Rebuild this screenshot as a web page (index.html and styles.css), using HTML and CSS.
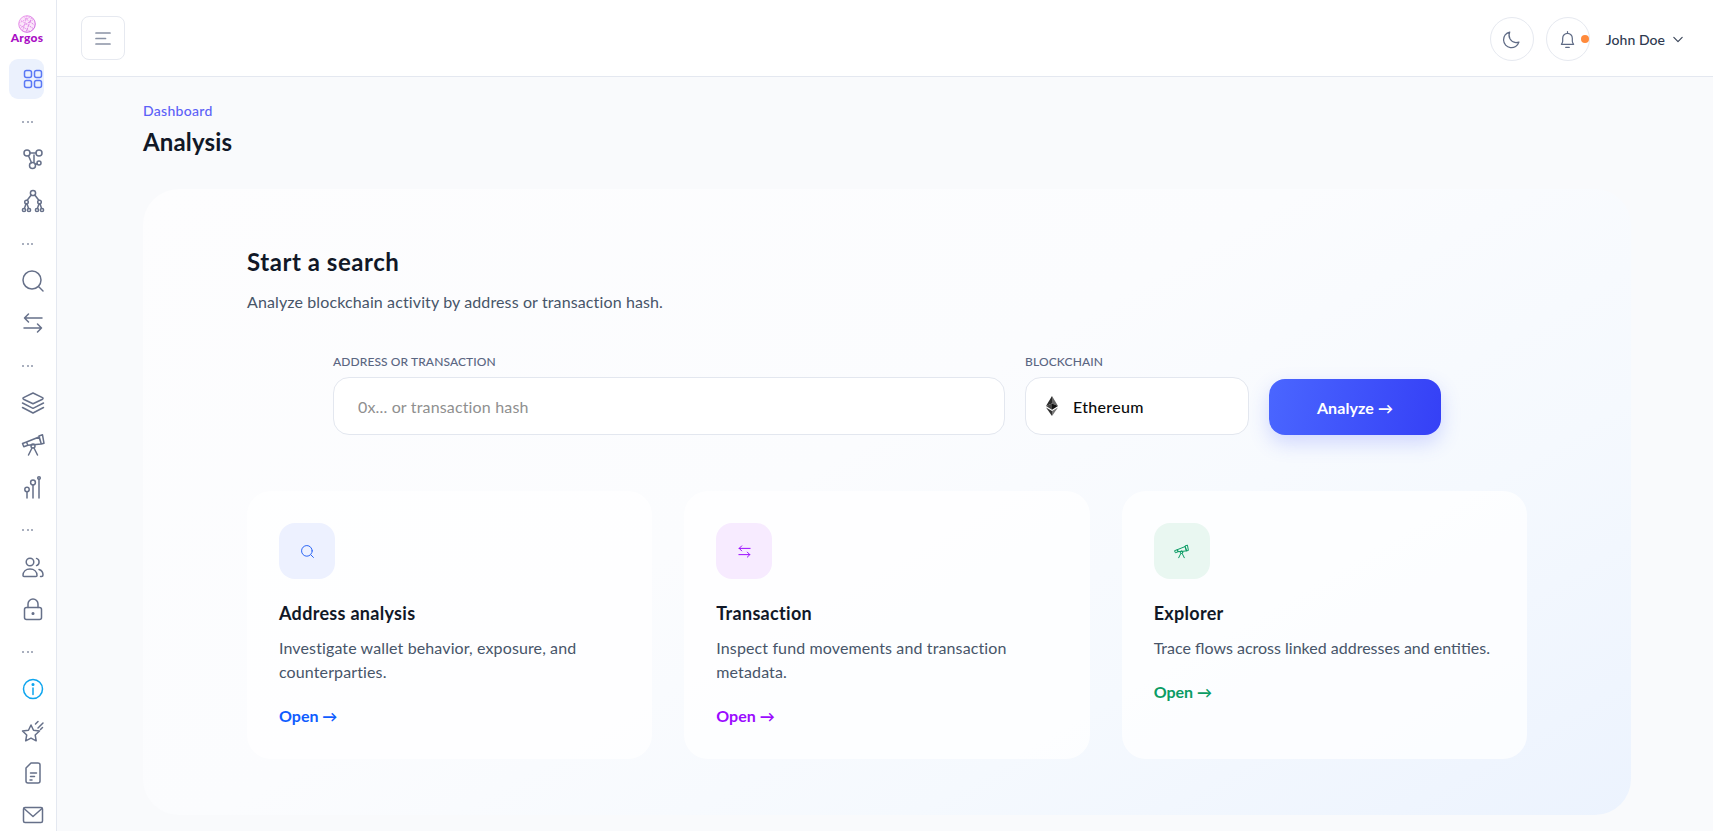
FILE: index.html
```html
<!DOCTYPE html>
<html lang="en">
<head>
<meta charset="utf-8">
<title>Analysis</title>
<link rel="stylesheet" href="styles.css">
</head>
<body>
<div class="app">
  <aside class="sidebar">
    <div class="logo">
      <svg class="logo-mark" viewBox="0 0 20 20"><defs><linearGradient id="lg" x1="0" y1="0" x2="1" y2="1"><stop offset="0" stop-color="#f0a0ec"/><stop offset="1" stop-color="#c040d8"/></linearGradient></defs><circle cx="10" cy="10" r="9.200" fill="#fbe6fa" stroke="url(#lg)" stroke-width="1"/><path d="M3 6l14 9M2 11l11 7M6 2l12 9M10 1L5 18M15 3L9 19M3 14L17 5M1 9l13-7" stroke="url(#lg)" stroke-width=".8" stroke-dasharray="1.600 .8" fill="none"/></svg>
      <span class="logo-text">Argos</span>
    </div>
    <nav class="nav">
      <a class="nav-item active"><svg class="ico" viewBox="0 0 24 24"><rect x="3.500" y="3.500" width="7" height="7" rx="2"/><rect x="13.500" y="3.500" width="7" height="7" rx="2"/><rect x="3.500" y="13.500" width="7" height="7" rx="2"/><rect x="13.500" y="13.500" width="7" height="7" rx="2"/></svg></a>
      <div class="nav-dots"><i></i><i></i><i></i></div>
      <a class="nav-item"><svg class="ico" viewBox="0 0 24 24"><circle cx="6" cy="6" r="3"/><circle cx="18" cy="6" r="3"/><circle cx="11.500" cy="18.500" r="3"/><circle cx="18" cy="16" r="2"/><path d="M9 6h6M7.500 8.700l3 7M13 8v7M14.400 17.500l1.800-.8"/></svg></a>
      <a class="nav-item"><svg class="ico" viewBox="0 0 24 24"><circle cx="12" cy="4" r="2.600"/><circle cx="5.500" cy="13" r="1.800"/><circle cx="18.500" cy="13" r="1.800"/><circle cx="3" cy="21" r="1.600"/><circle cx="8" cy="21" r="1.600"/><circle cx="16" cy="21" r="1.600"/><circle cx="21" cy="21" r="1.600"/><path d="M10.200 6L6.200 11.300M13.800 6l4 5.300M5 14.800l-1.600 4.600M6 14.800l1.600 4.600M18 14.800l-1.600 4.600M19 14.800l1.600 4.600"/></svg></a>
      <div class="nav-dots"><i></i><i></i><i></i></div>
      <a class="nav-item"><svg class="ico" viewBox="0 0 24 24"><circle cx="11" cy="11" r="9"/><path d="M18 18l4 4"/></svg></a>
      <a class="nav-item"><svg class="ico" viewBox="0 0 24 24"><path d="M21 7H3.500M7.500 3L3.500 7l4 4M3 17h17.500M16.500 13l4 4-4 4"/></svg></a>
      <div class="nav-dots"><i></i><i></i><i></i></div>
      <a class="nav-item"><svg class="ico" viewBox="0 0 24 24"><path d="M12 2l9.500 4.600c.7.4.7 1.200 0 1.600L12 12.800 2.500 8.200c-.7-.4-.7-1.200 0-1.600z"/><path d="M1.500 12l10.500 5.300L22.500 12M1.500 16.500L12 22l10.500-5.500"/></svg></a>
      <a class="nav-item"><svg class="ico" viewBox="0 0 24 24"><path d="M1.500 10.500l4-1.500 1.300 3.300-4 1.500zM5.500 9L18 4l2.300 7-13.500 1.300zM18 3l3.500-1.200 1.500 8.500-2.700.7z"/><circle cx="12" cy="13" r="2"/><path d="M11 15l-3.500 7M13 15l3.500 7"/></svg></a>
      <a class="nav-item"><svg class="ico" viewBox="0 0 24 24"><path d="M6 17v6M12 10v13M18 4v19"/><circle cx="6" cy="14.500" r="2.200"/><circle cx="12" cy="7.500" r="2.400"/><circle cx="18" cy="3" r="1.300"/></svg></a>
      <div class="nav-dots"><i></i><i></i><i></i></div>
      <a class="nav-item"><svg class="ico" viewBox="0 0 24 24"><circle cx="9" cy="7" r="3.800"/><path d="M2 20.500c0-4 3-6.500 7-6.500s7 2.500 7 6.500c0 .6-.4 1-1 1H3c-.6 0-1-.4-1-1z"/><path d="M15.500 3.400a3.800 3.800 0 0 1 0 7.200M18 14.500c2.500.7 4 2.800 4 5.500 0 1-.6 1.500-1.500 1.500h-1"/></svg></a>
      <a class="nav-item"><svg class="ico" viewBox="0 0 24 24"><rect x="3.500" y="10.500" width="17" height="12" rx="2"/><path d="M7 10.500V7a5 5 0 0 1 10 0v3.500"/><circle class="solid" cx="12" cy="16.500" r=".8"/></svg></a>
      <div class="nav-dots"><i></i><i></i><i></i></div>
      <a class="nav-item info"><svg class="ico" viewBox="0 0 24 24"><circle cx="12" cy="12" r="9.500"/><path d="M12 11v6.500"/><circle class="solid" cx="12" cy="7.500" r=".8"/></svg></a>
      <a class="nav-item"><svg class="ico" viewBox="0 0 24 24"><path d="M10 6l2.500 5.200 6 .8-4.300 4 1 5.800-5.200-2.700-5.300 2.700 1-5.800L1.500 12l6-.8z"/><path d="M14.500 5l2.500-2.500M17 9l5-5M19.500 10.500l2-2"/></svg></a>
      <a class="nav-item"><svg class="ico" viewBox="0 0 24 24"><path d="M10 2h7a2 2 0 0 1 2 2v16a2 2 0 0 1-2 2H7a2 2 0 0 1-2-2V7z"/><path d="M9.500 12h6M9.500 15.500h4M9 19h2"/></svg></a>
      <a class="nav-item"><svg class="ico" viewBox="0 0 24 24"><rect x="2.500" y="4.500" width="19" height="15" rx="1.500"/><path d="M3 5.500l9 8 9-8"/></svg></a>
    </nav>
  </aside>

  <div class="main">
    <header class="topbar">
      <button class="toggle" type="button" aria-label="Menu"><svg viewBox="0 0 16 14"><path d="M1 2h14M1 7.500h9.500M1 13h14"/></svg></button>
      <div class="top-actions">
        <button class="round" type="button" aria-label="Theme"><svg viewBox="0 0 24 24"><path d="M10 3.500a9 9 0 1 0 10.500 11.500c-1 .5-2.200.6-3.500.6A8.500 8.500 0 0 1 10 3.500z"/></svg></button>
        <button class="round" type="button" aria-label="Notifications"><svg viewBox="0 0 24 24"><path d="M5 17.500c.9-1.200 1.500-2 1.500-3.500v-3.500a5.500 5.500 0 0 1 11 0V14c0 1.500.6 2.300 1.500 3.500zM10 21h4M12 3v2"/></svg><span class="notify"></span></button>
        <div class="user"><span>John Doe</span><svg viewBox="0 0 12 8"><path d="M1 1.500l5 5 5-5"/></svg></div>
      </div>
    </header>

    <main class="content">
      <a class="crumb">Dashboard</a>
      <h1 class="page-title">Analysis</h1>

      <section class="panel">
        <h2 class="panel-title">Start a search</h2>
        <p class="panel-sub">Analyze blockchain activity by address or transaction hash.</p>

        <form class="search-row">
          <label class="field grow"><span class="field-label label-long">ADDRESS OR TRANSACTION</span><input class="input" type="text" placeholder="0x... or transaction hash"></label>
          <div class="field chain"><span class="field-label">BLOCKCHAIN</span>
            <div class="input select"><svg class="eth" viewBox="0 0 12 20"><path fill="#666" d="M6 0v7.400l6 2.700z"/><path fill="#2a2a2a" d="M6 0L0 10.100l6-2.700z"/><path fill="#111" d="M6 7.400v6.300l6-3.600z"/><path fill="#444" d="M6 7.400l-6 2.700 6 3.600z"/><path fill="#777" d="M6 14.900V20l6-8.500z"/><path fill="#333" d="M6 14.900L0 11.500 6 20z"/></svg><span>Ethereum</span></div>
          </div>
          <button class="analyze" type="button">Analyze <span class="arr">→</span></button>
        </form>

        <div class="cards">
          <article class="card">
            <div class="card-icon blue"><svg viewBox="0 0 24 24"><circle cx="11" cy="11" r="8.500"/><path d="M17.500 17.500l4 4"/></svg></div>
            <h3>Address analysis</h3>
            <p>Investigate wallet behavior, exposure, and counterparties.</p>
            <a class="open blue-text">Open <span class="arr">→</span></a>
          </article>
          <article class="card">
            <div class="card-icon purple"><svg viewBox="0 0 24 24"><path d="M21 7H3.500M7.500 3L3.500 7l4 4M3 17h17.500M16.500 13l4 4-4 4"/></svg></div>
            <h3>Transaction</h3>
            <p>Inspect fund movements and transaction metadata.</p>
            <a class="open purple-text">Open <span class="arr">→</span></a>
          </article>
          <article class="card">
            <div class="card-icon green"><svg viewBox="0 0 24 24"><path d="M1.500 10.500l4-1.500 1.300 3.300-4 1.500zM5.500 9L18 4l2.300 7-13.500 1.300zM18 3l3.500-1.200 1.500 8.500-2.700.7z"/><circle cx="12" cy="13" r="2"/><path d="M11 15l-3.500 7M13 15l3.500 7"/></svg></div>
            <h3>Explorer</h3>
            <p class="tight">Trace flows across linked addresses and entities.</p>
            <a class="open green-text">Open <span class="arr">→</span></a>
          </article>
        </div>
      </section>
    </main>
  </div>
</div>
</body>
</html>
```

FILE: styles.css
```css
* { box-sizing: border-box; }
html, body { margin: 0; height: 100%; }
body {
  font-family: "Lato", "Noto Sans", sans-serif;
  background: #f9fafc;
  color: #0f172a;
  overflow: hidden;
}
h1, h2, h3, p { margin: 0; }
button { font-family: inherit; cursor: pointer; }

.app { display: flex; height: 831px; }

.sidebar {
  flex: 0 0 57px;
  background: #fff;
  border-right: 1px solid #e4e8f0;
}
.logo {
  height: 58px;
  padding-top: 15px;
  display: flex;
  flex-direction: column;
  align-items: center;
  width: 54px;
}
.logo-mark { width: 18px; height: 18px; display: block; flex: none; }
.logo-text {
  margin-top: -1px;
  font-size: 12px;
  line-height: 11px;
  font-weight: 900;
  color: #a90fc4;
  letter-spacing: .25px;
}
.nav { display: flex; flex-direction: column; }
.nav-item {
  display: flex;
  align-items: center;
  height: 40px;
  margin: 1px 0 1px 9px;
  width: 35px;
  padding-left: 12px;
  border-radius: 9px;
  color: #667089;
}
.nav-item.active { background: #ebf1fd; color: #5a78f5; }
.nav-item.info { color: #0ea5ee; }
.ico {
  width: 24px;
  height: 24px;
  flex: none;
  fill: none;
  stroke: currentColor;
  stroke-width: 1.500;
  stroke-linecap: round;
  stroke-linejoin: round;
}
.ico .solid { fill: currentColor; }
.nav-dots {
  height: 38px;
  padding-top: 6px;
  padding-left: 22px;
  display: flex;
  align-items: center;
  gap: 2.500px;
}
.nav-dots i { width: 2px; height: 2px; background: #8d95a8; border-radius: 50%; }

.main { flex: 1; min-width: 0; display: flex; flex-direction: column; }

.topbar {
  height: 77px;
  flex: none;
  background: #fff;
  border-bottom: 1px solid #e4e8f0;
  display: flex;
  align-items: center;
  justify-content: space-between;
  padding: 0 30px 0 24px;
}
.toggle {
  width: 44px;
  height: 44px;
  background: #fff;
  border: 1px solid #e6e9f0;
  border-radius: 8px;
  display: flex;
  align-items: center;
  justify-content: center;
  padding: 0;
}
.toggle svg { width: 16px; height: 14px; fill: none; stroke: #8a92a5; stroke-width: 1.700; stroke-linecap: round; }
.top-actions { display: flex; align-items: center; margin-top: 2px; }
.round {
  position: relative;
  width: 44px;
  height: 44px;
  border: 1px solid #e6e9f0;
  border-radius: 50%;
  background: #fff;
  display: flex;
  align-items: center;
  justify-content: center;
  padding: 0;
  margin-right: 12px;
}
.round svg { width: 21px; height: 21px; fill: none; stroke: #5f6b85; stroke-width: 1.400; stroke-linecap: round; stroke-linejoin: round; }
.notify {
  position: absolute;
  right: 0;
  top: 17px;
  width: 8px;
  height: 8px;
  border-radius: 50%;
  background: #ff8a3c;
}
.user {
  display: flex;
  align-items: center;
  gap: 8px;
  margin-left: 4px;
  font-size: 14px;
  font-weight: 500;
  color: #2f3a50;
  letter-spacing: .05px;
}
.user svg { width: 10px; height: 7px; fill: none; stroke: #3a4559; stroke-width: 1.400; stroke-linecap: round; stroke-linejoin: round; }

.content {
  flex: 1;
  padding: 24px 82px 0 86px;
  min-height: 0;
}
.crumb {
  display: block;
  font-size: 14px;
  line-height: 20px;
  font-weight: 500;
  color: #5c61f7;
  letter-spacing: .3px;
}
.page-title {
  margin-top: 5px;
  font-size: 24px;
  line-height: 32px;
  font-weight: 700;
  color: #111827;
  letter-spacing: .15px;
}
.panel {
  margin-top: 31px;
  height: 626px;
  padding: 57px 104px 0 104px;
  border-radius: 36px;
  background: linear-gradient(150deg, #fdfdfe 0%, #fbfcfe 45%, #f5f9fe 72%, #ecf3fe 100%);
}
.panel-title {
  font-size: 24px;
  line-height: 32px;
  font-weight: 700;
  color: #111827;
  letter-spacing: .55px;
}
.panel-sub {
  margin-top: 12px;
  font-size: 16px;
  line-height: 24px;
  color: #475569;
  letter-spacing: .12px;
}
.search-row {
  margin-top: 39px;
  padding: 0 86px;
  display: flex;
  align-items: flex-end;
  gap: 20px;
}
.field { display: flex; flex-direction: column; }
.grow { flex: 1; min-width: 0; }
.chain { flex: 0 0 224px; }
.field-label {
  font-size: 12px;
  line-height: 16px;
  margin-top: 1px;
  margin-bottom: 7px;
  font-weight: 500;
  color: #5a6682;
  letter-spacing: .15px;
}
.label-long { letter-spacing: .1px; }
.input {
  height: 58px;
  width: 100%;
  background: #fff;
  border: 1px solid #e3e7ef;
  border-radius: 16px;
  padding: 0 24px;
  font-family: inherit;
  font-size: 16px;
  letter-spacing: .16px;
  color: #111;
  outline: none;
}
.input::placeholder { color: #8f8f8f; opacity: 1; }
.select { display: flex; align-items: center; gap: 15px; padding: 0 20px; font-weight: 500; color: #0b0b0b; letter-spacing: .3px; }
.eth { width: 12px; height: 20px; flex: none; }
.analyze {
  flex: 0 0 172px;
  height: 56px;
  border: 0;
  border-radius: 16px;
  background: linear-gradient(100deg, #4a66ff, #3540f6);
  color: #fff;
  font-size: 16px;
  font-weight: 700;
  letter-spacing: .1px;
  box-shadow: 0 8px 20px rgba(70, 90, 255, .22);
}
.arr { font-size: 15px; font-weight: 700; }
.cards {
  margin-top: 56px;
  display: grid;
  grid-template-columns: repeat(3, 1fr);
  gap: 32px;
}
.card {
  height: 268px;
  padding: 32px 32px 31px;
  border-radius: 24px;
  background: rgba(255, 255, 255, .75);
  display: flex;
  flex-direction: column;
  align-items: flex-start;
}
.card-icon {
  flex: none;
  width: 56px;
  height: 56px;
  border-radius: 16px;
  display: flex;
  align-items: center;
  justify-content: center;
}
.card-icon svg { width: 15px; height: 15px; fill: none; stroke: currentColor; stroke-width: 1.600; stroke-linecap: round; stroke-linejoin: round; }
.blue { background: #edf1ff; color: #2c66f5; }
.purple { background: #f7ebff; color: #9b0bff; }
.green { background: #e9f7f1; color: #0a9c64; }
.card h3 {
  margin-top: 20px;
  font-size: 18px;
  line-height: 28px;
  font-weight: 700;
  color: #111827;
  letter-spacing: .3px;
}
.card p {
  margin-top: 9px;
  font-size: 16px;
  line-height: 24px;
  color: #475569;
  letter-spacing: .12px;
}
.card p.tight { letter-spacing: 0; }
.open {
  margin-top: 20px;
  font-size: 16px;
  line-height: 24px;
  font-weight: 700;
}
.blue-text { color: #0f5cff; }
.purple-text { color: #9b0bff; }
.green-text { color: #0a9c64; }
```
